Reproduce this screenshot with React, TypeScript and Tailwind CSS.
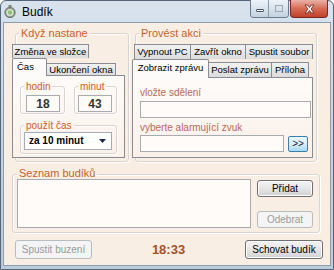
import React from "react";

const F = { fontFamily: "'Liberation Sans', Arial, sans-serif" };

function Group({
  label,
  className,
  labelClass,
  children,
}: {
  label: string;
  className: string;
  labelClass: string;
  children?: React.ReactNode;
}) {
  return (
    <div className={"relative shrink-0 rounded-[3px] border border-[#d9d4cf] shadow-[inset_1px_1px_0_#ffffff,1px_1px_0_#ffffff] " + className}>
      <span className={"absolute bg-[#f9eee4] px-[2px] leading-none " + labelClass}>{label}</span>
      {children}
    </div>
  );
}

function Tab({ label, className, selected }: { label: string; className: string; selected?: boolean }) {
  return (
    <div
      className={
        "flex shrink-0 items-center justify-center border border-[#898c95] text-[9.5px] leading-none text-black " +
        (selected
          ? "relative z-10 mb-[-1px] rounded-t-[2px] border-b-0 bg-[#fdfbf9] "
          : "bg-gradient-to-b from-[#f2f2f2] to-[#dcdcdc] ") +
        className
      }
    >
      {label}
    </div>
  );
}

function Btn({ label, className, disabled }: { label: string; className: string; disabled?: boolean }) {
  return (
    <div
      className={
        "flex shrink-0 items-center justify-center rounded-[3px] border text-[10px] leading-none " +
        (disabled
          ? "border-[#b7bcbf] bg-[#f4f4f4] text-[#9a9a9a] "
          : "border-[#707070] bg-gradient-to-b from-[#f3f3f3] via-[#e6e6e6] to-[#d2d2d2] text-black shadow-[inset_0_0_0_1px_#fcfcfc] ") +
        className
      }
    >
      {label}
    </div>
  );
}

function TextBox({ className, children }: { className: string; children?: React.ReactNode }) {
  return (
    <div className={"flex shrink-0 items-center justify-center border border-[#a9abb0] bg-[#fffbf8] " + className}>
      {children}
    </div>
  );
}

export default function App() {
  return (
    <div style={F} className="h-[270px] w-[334px] overflow-hidden">
      <div className="flex h-[270px] w-[334px] flex-col rounded-t-[6px] border border-[#56667a] bg-gradient-to-b from-[#d8e3ee] via-[#c4d3e2] to-[#bccbda]">
        {/* Title bar */}
        <div className="flex h-[21px] shrink-0 items-start">
          <svg className="ml-[3px] mt-[4px]" width="12" height="13" viewBox="0 0 12 13">
            <rect x="4.5" y="0" width="3" height="2" fill="#7d8a7a" />
            <circle cx="6" cy="7.5" r="5.2" fill="#8f9c8c" stroke="#5f6c5f" strokeWidth="0.8" />
            <circle cx="6" cy="7.5" r="3.6" fill="#dfe8d8" />
            <circle cx="6" cy="7.5" r="2.2" fill="#8fbf7a" />
          </svg>
          <span className="ml-[6px] mt-[4px] text-[12px] leading-[14px] text-black">Budík</span>
          <div className="flex-1" />
          <div className="mt-[-1px] flex h-[18px] overflow-hidden rounded-b-[4px] border border-t-0 border-[#6b7c8f]">
            <div className="flex w-[18px] items-center justify-center border-r border-[#8a9aab] bg-gradient-to-b from-[#eef3f8] via-[#d9e3ed] to-[#c3d1df]">
              <div className="mt-[4px] h-[3px] w-[8px] rounded-[1px] border border-[#4b5563] bg-white" />
            </div>
            <div className="flex w-[19px] items-center justify-center bg-gradient-to-b from-[#eef3f8] via-[#d9e3ed] to-[#c3d1df]">
              <div className="h-[7px] w-[8px] border border-[#9aa6b4] bg-transparent" />
            </div>
          </div>
          <div className="ml-[1px] mr-[5px] mt-[-1px] flex h-[18px] w-[38px] items-center justify-center rounded-b-[4px] border border-t-0 border-[#7a2a1e] bg-gradient-to-b from-[#e9b1a6] via-[#d56b55] to-[#c2402a]">
            <svg width="11" height="10" viewBox="0 0 11 10">
              <path
                d="M1 1 L3.5 1 L5.5 3.5 L7.5 1 L10 1 L7 5 L10 9 L7.5 9 L5.5 6.5 L3.5 9 L1 9 L4 5 Z"
                fill="#ffffff"
                stroke="#5a2018"
                strokeWidth="0.8"
                strokeLinejoin="round"
              />
            </svg>
          </div>
        </div>

        {/* Client area */}
        <div className="mx-[2px] mb-[3px] flex flex-1 flex-col border border-[#8c9cad] bg-[#f9eee4]">
          {/* Top groups */}
          <div className="mt-[10px] flex h-[129px] items-start">
            <Group
              label="Když nastane"
              className="ml-[11px] h-[129px] w-[114px]"
              labelClass="left-[3px] top-[-6px] text-[11px] text-[#c8622a]"
            >
              <div className="ml-[-4px] mt-[10px] flex w-[113px] flex-col">
                <div className="flex h-[14px]">
                  <Tab label="Změna ve složce" className="h-[14px] w-[77px] border-b-0" />
                </div>
                <div className="flex h-[17px] items-end">
                  <Tab label="Čas" selected className="h-[18px] w-[35px] justify-start pl-[4px] pb-[2px]" />
                  <Tab label="Ukončení okna" className="h-[12px] w-[69px] border-b-0 border-l-0" />
                </div>
                <div className="flex h-[83px] flex-col border border-[#898c95] bg-gradient-to-b from-[#fdfbf9] to-[#faf1e9]">
                  <div className="ml-[7px] mt-[10px] flex">
                    <Group
                      label="hodin"
                      className="h-[28px] w-[45px]"
                      labelClass="left-[3px] top-[-5px] text-[10px] text-[#c8622a] bg-[#fcf6f1]"
                    >
                      <TextBox className="ml-[5px] mt-[8px] h-[17px] w-[34px]">
                        <span className="text-[12px] font-bold text-[#333]">18</span>
                      </TextBox>
                    </Group>
                    <Group
                      label="minut"
                      className="ml-[9px] h-[28px] w-[43px]"
                      labelClass="left-[3px] top-[-5px] text-[10px] text-[#c8622a] bg-[#fcf6f1]"
                    >
                      <TextBox className="ml-[3px] mt-[8px] h-[17px] w-[34px]">
                        <span className="text-[12px] font-bold text-[#333]">43</span>
                      </TextBox>
                    </Group>
                  </div>
                  <Group
                    label="použít čas"
                    className="ml-[7px] mt-[11px] h-[29px] w-[97px]"
                    labelClass="left-[3px] top-[-5px] text-[10px] text-[#c8622a] bg-[#fbf4ee]"
                  >
                    <div className="ml-[3px] mt-[6px] flex h-[18px] w-[88px] items-center border border-[#a5acb5] bg-white">
                      <span className="ml-[4px] flex-1 text-[10px] font-bold leading-none text-black">za 10 minut</span>
                      <svg className="mr-[5px]" width="7" height="4" viewBox="0 0 7 4">
                        <path d="M0 0 H7 L3.5 4 Z" fill="#1e2a4a" />
                      </svg>
                    </div>
                  </Group>
                </div>
              </div>
            </Group>

            <Group
              label="Provést akci"
              className="ml-[6px] h-[129px] w-[182px]"
              labelClass="left-[3px] top-[-6px] text-[11px] text-[#c8622a]"
            >
              <div className="ml-[-4px] mt-[10px] flex w-[181px] flex-col">
                <div className="flex h-[15px] pl-[2px]">
                  <Tab label="Vypnout PC" className="h-[15px] w-[57px] border-b-0" />
                  <Tab label="Zavřít okno" className="h-[15px] w-[55px] border-b-0 border-l-0" />
                  <Tab label="Spustit soubor" className="h-[15px] w-[67px] border-b-0 border-l-0" />
                </div>
                <div className="flex h-[18px] items-end">
                  <Tab label="Zobrazit zprávu" selected className="h-[19px] w-[77px] pb-[2px]" />
                  <Tab label="Poslat zprávu" className="h-[15px] w-[63px] border-b-0 border-l-0" />
                  <Tab label="Příloha" className="h-[15px] w-[37px] border-b-0 border-l-0" />
                </div>
                <div className="flex h-[81px] flex-col border border-[#898c95] bg-gradient-to-b from-[#fdfbf9] to-[#faf1e9]">
                  <span className="ml-[7px] mt-[9px] text-[10px] leading-[12px] text-[#b96a55]">vložte sdělení</span>
                  <TextBox className="ml-[7px] mt-[2px] h-[17px] w-[171px]" />
                  <span className="ml-[7px] mt-[4px] text-[10px] leading-[12px] text-[#b96a55]">vyberte alarmující zvuk</span>
                  <div className="ml-[7px] mt-[1px] flex items-start">
                    <TextBox className="h-[17px] w-[144px]" />
                    <div className="ml-[4px] mt-[1px] flex h-[16px] w-[20px] items-center justify-center rounded-[2px] border border-[#3c7fb1] bg-gradient-to-b from-[#eaf6fd] via-[#d9f0fc] to-[#a7d9f5] text-[10px] leading-none text-[#1a1a40]">
                      &gt;&gt;
                    </div>
                  </div>
                </div>
              </div>
            </Group>
          </div>

          {/* Seznam budíků */}
          <Group
            label="Seznam budíků"
            className="ml-[8px] mt-[12px] h-[59px] w-[308px]"
            labelClass="left-[4px] top-[-7px] text-[11px] text-[#c8622a]"
          >
            <div className="flex">
              <div className="ml-[4px] mt-[4px] h-[49px] w-[234px] border border-[#a9abb0] bg-[#fffbf8]" />
              <div className="ml-[6px] flex flex-col">
                <Btn label="Přidat" className="mt-[5px] h-[17px] w-[56px]" />
                <Btn label="Odebrat" disabled className="mt-[14px] h-[17px] w-[56px]" />
              </div>
            </div>
          </Group>

          {/* Bottom row */}
          <div className="ml-[11px] mr-[7px] mt-[7px] flex items-center">
            <Btn label="Spustit buzení" disabled className="h-[19px] w-[77px]" />
            <div className="flex-1 text-center text-[13px] font-bold leading-none text-[#a3522a]">18:33</div>
            <Btn label="Schovat budík" className="h-[19px] w-[78px]" />
          </div>
        </div>
      </div>
    </div>
  );
}
